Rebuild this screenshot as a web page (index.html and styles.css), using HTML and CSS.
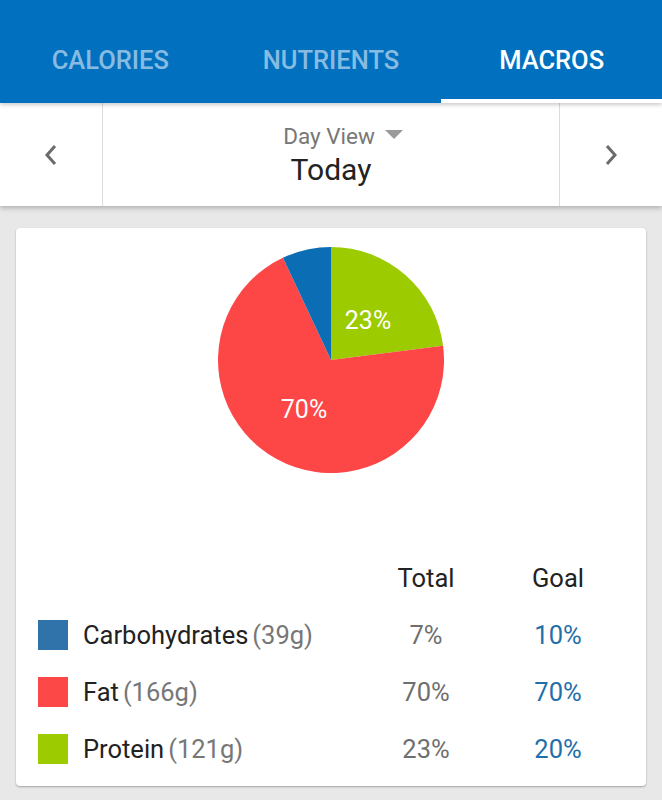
FILE: index.html
```html
<!DOCTYPE html>
<html lang="en">
<head>
    <meta charset="UTF-8">
    <meta name="viewport" content="width=device-width, initial-scale=1.0">
    <title>Macros</title>
    <link rel="stylesheet" href="styles.css">
</head>
<body>
    <div class="tabs">
        <div class="tab">CALORIES</div>
        <div class="tab">NUTRIENTS</div>
        <div class="tab active">MACROS</div>
    </div>

    <div class="date-bar">
        <div class="nav-btn">
            <svg width="14" height="22" viewBox="0 0 14 22"><path d="M11 2 L3 11 L11 20" fill="none" stroke="#6b6b6b" stroke-width="3"/></svg>
        </div>
        <div class="date-center">
            <div class="view-label">Day View <span class="caret"></span></div>
            <div class="date-label">Today</div>
        </div>
        <div class="nav-btn">
            <svg width="14" height="22" viewBox="0 0 14 22"><path d="M3 2 L11 11 L3 20" fill="none" stroke="#6b6b6b" stroke-width="3"/></svg>
        </div>
    </div>

    <div class="content">
        <div class="card">
            <div class="pie-wrap">
                <svg class="pie" width="226" height="226" viewBox="0 0 226 226">
                    <path d="M113 113 L113 0 A113 113 0 0 1 225.1 98.8 Z" fill="#9ccb00"/>
                    <path d="M113 113 L225.1 98.8 A113 113 0 1 1 64.9 10.8 Z" fill="#fd4646"/>
                    <path d="M113 113 L64.9 10.8 A113 113 0 0 1 113 0 Z" fill="#0b6db4"/>
                    <text x="150" y="82" class="pie-text">23%</text>
                    <text x="86" y="171" class="pie-text">70%</text>
                </svg>
            </div>

            <div class="macro-table">
                <div class="cell"></div>
                <div class="cell head">Total</div>
                <div class="cell head">Goal</div>

                <div class="cell name"><span class="swatch carbs"></span>Carbohydrates<span class="grams">(39g)</span></div>
                <div class="cell total">7%</div>
                <div class="cell goal">10%</div>

                <div class="cell name"><span class="swatch fat"></span>Fat<span class="grams">(166g)</span></div>
                <div class="cell total">70%</div>
                <div class="cell goal">70%</div>

                <div class="cell name"><span class="swatch protein"></span>Protein<span class="grams">(121g)</span></div>
                <div class="cell total">23%</div>
                <div class="cell goal">20%</div>
            </div>
        </div>
    </div>
</body>
</html>
```
FILE: styles.css
```css
/* General Styles */
body {
    margin: 0;
    font-family: Roboto, "Liberation Sans", sans-serif;
    background-color: #e8e8e8;
    color: #222;
}

/* Tabs */
.tabs {
    display: grid;
    grid-template-columns: 1fr 1fr 1fr;
    height: 103px;
    background-color: #0070bf;
    position: relative;
    z-index: 2;
    box-shadow: 0 2px 4px rgba(0, 0, 0, 0.2);
}

.tab {
    display: flex;
    justify-content: center;
    align-items: center;
    padding-top: 21px;
    border-bottom: 4px solid transparent;
    font-size: 25.5px;
    font-weight: 500;
    color: rgba(255, 255, 255, 0.55);
}

.tab.active {
    color: #fff;
    border-bottom-color: #fff;
}

/* Date bar */
.date-bar {
    display: grid;
    grid-template-columns: 103px 1fr 103px;
    height: 103px;
    background-color: #fff;
    position: relative;
    z-index: 1;
    box-shadow: 0 2px 5px rgba(0, 0, 0, 0.25);
}

.nav-btn {
    display: flex;
    justify-content: center;
    align-items: center;
}

.nav-btn:first-child {
    border-right: 1px solid #dcdcdc;
}

.nav-btn:last-child {
    border-left: 1px solid #dcdcdc;
}

.date-center {
    display: flex;
    flex-direction: column;
    align-items: center;
    justify-content: center;
    gap: 3px;
    padding-top: 1px;
}

.view-label {
    font-size: 22.5px;
    color: #777;
    display: flex;
    align-items: center;
    gap: 10px;
    padding-left: 24px;
}

.caret {
    width: 0;
    height: 0;
    border-left: 9px solid transparent;
    border-right: 9px solid transparent;
    border-top: 9px solid #9a9a9a;
    margin-top: -4px;
}

.date-label {
    font-size: 30px;
    color: #222;
}

/* Card */
.content {
    padding: 22px 16px 12px;
}

.card {
    background-color: #fff;
    border-radius: 4px;
    box-shadow: 0 1px 2px rgba(0, 0, 0, 0.3);
    padding: 19px 22px 9px;
}

.pie-wrap {
    display: flex;
    justify-content: center;
}

.pie-text {
    fill: #fff;
    font-family: Roboto, "Liberation Sans", sans-serif;
    font-size: 25px;
    text-anchor: middle;
}

.macro-table {
    display: grid;
    grid-template-columns: 1fr 132px 132px;
    grid-auto-rows: 57px;
    margin-top: 76px;
}

.cell {
    display: flex;
    align-items: center;
    justify-content: center;
    font-size: 25.5px;
}

.cell.head {
    color: #222;
}

.cell.name {
    justify-content: flex-start;
}

.swatch {
    width: 30px;
    height: 30px;
    margin-right: 15px;
}

.swatch.carbs { background-color: #2f73aa; }
.swatch.fat { background-color: #fd4848; }
.swatch.protein { background-color: #9ccc00; }

.grams {
    color: #777;
    margin-left: 4px;
}

.cell.total {
    color: #6f6f6f;
}

.cell.goal {
    color: #1f6fab;
}
```
